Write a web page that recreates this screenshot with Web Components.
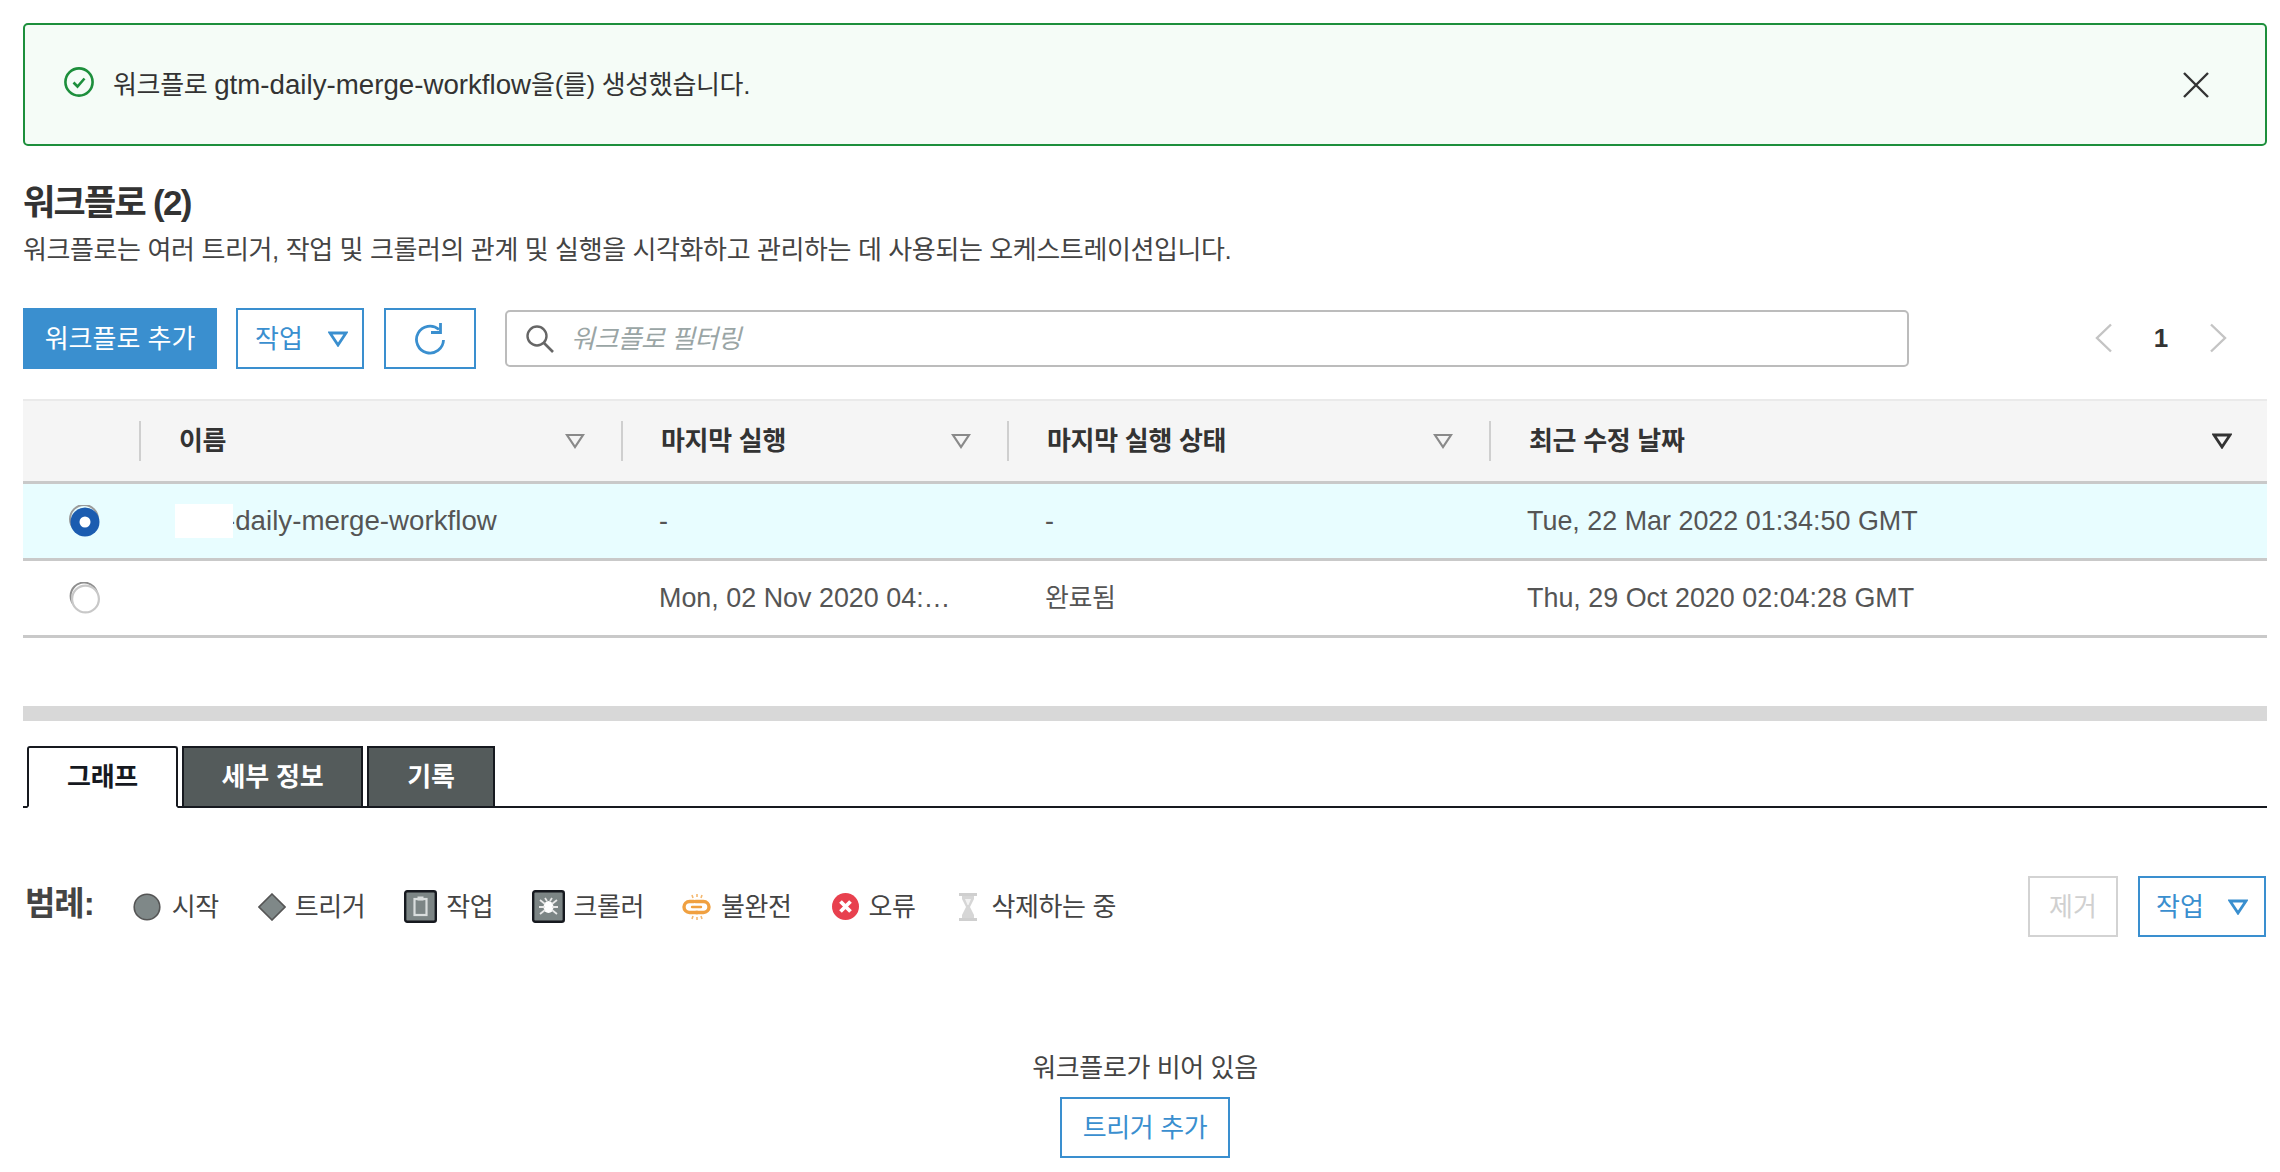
<!DOCTYPE html>
<html lang="ko"><head><meta charset="utf-8"><title>워크플로</title>
<style>
html,body{margin:0;padding:0;background:#fff;overflow:hidden}
body{font:26px/36px "Liberation Sans","Noto Sans CJK KR",sans-serif;color:#444;width:2280px;height:1172px}
</style></head><body>
<wf-page></wf-page>
<script>
const caret=(c='#3a8fcf',w=2.8)=>`<svg width="20" height="16" viewBox="0 0 20 16"><path d="M2 2H18L10 14Z" fill="none" stroke="${c}" stroke-width="${w}" stroke-linejoin="miter"/></svg>`;
function def(name,css,html){
  customElements.define(name,class extends HTMLElement{
    constructor(){super();const s=this.attachShadow({mode:'open'});s.innerHTML=`<style>${css}</style>${typeof html==='function'?html(this):html}`;}
  });
}
def('wf-alert',`:host{display:flex;align-items:center;box-sizing:border-box;height:123px;border:2px solid #1d8f3c;border-radius:5px;background:#f5fcf7;padding:0 56px 0 39px;color:#333;letter-spacing:-.35px}
 .t{flex:1;margin-left:19px;margin-top:1px} svg{display:block} .i{margin-top:-6px;flex:none}`,
 `<svg class="i" width="30" height="30" viewBox="0 0 30 30"><circle cx="15" cy="15" r="13.6" fill="none" stroke="#1d8f3c" stroke-width="2.6"/><path d="M9.5 15.5l4 4 7-8" fill="none" stroke="#1d8f3c" stroke-width="2.6"/></svg>
 <div class="t"><slot></slot></div>
 <svg width="26" height="26" viewBox="0 0 26 26"><path d="M1 1L25 25M25 1L1 25" stroke="#333" stroke-width="2.4"/></svg>`);
def('wf-btn',`:host{display:inline-flex;align-items:center;justify-content:center;box-sizing:border-box;height:61px;border:2px solid #3a8fcf;background:#fff;color:#3a8fcf;font-size:26px;white-space:nowrap}
 :host([primary]){background:#3a8fcf;color:#fff}
 :host([disabled]){border-color:#d3d3d3;color:#d0d0d0}`,`<slot></slot>`);
def('wf-filter',`:host{display:flex;align-items:center;box-sizing:border-box;height:57px;border:2px solid #bcbcbc;border-radius:5px;color:#9aa5a5;font-style:italic;padding-left:18px;letter-spacing:-.6px}
 svg{margin-right:16px;flex:none}`,
 `<svg width="30" height="30" viewBox="0 0 30 30"><circle cx="12" cy="12" r="9.5" fill="none" stroke="#666" stroke-width="2.4"/><path d="M19 19l9 9" stroke="#666" stroke-width="2.6"/></svg><slot></slot>`);
def('wf-pager',`:host{display:flex;align-items:center;color:#333;font-weight:700;margin-top:-2px}
 span{width:28px;text-align:center;margin:0 34px}`,
 `<svg width="18" height="30" viewBox="0 0 18 30"><path d="M16 1.5L2 15L16 28.5" fill="none" stroke="#c4c4c4" stroke-width="2.4"/></svg><span>1</span><svg width="18" height="30" viewBox="0 0 18 30"><path d="M2 1.5L16 15L2 28.5" fill="none" stroke="#c4c4c4" stroke-width="2.4"/></svg>`);
const cols='116px 482px 386px 482px 1fr';
def('wf-th',`:host{display:flex;align-items:center;box-sizing:border-box;height:40px;border-left:2px solid #cfcfcf;padding-left:38px;padding-right:36px;font-weight:700;color:#333;justify-content:space-between;letter-spacing:-.3px}
 :host([last]){padding-right:35px}`,
 t=>`<slot></slot>${caret(t.hasAttribute('last')?'#333':'#8a8a8a',t.hasAttribute('last')?2.8:2.2)}`);
def('wf-head',`:host{display:grid;grid-template-columns:${cols};align-items:center;box-sizing:border-box;height:85px;background:#f5f5f5;border-top:2px solid #eaeaea;border-bottom:3px solid #c9c9c9}`,`<slot></slot>`);
def('wf-row',`:host{display:grid;grid-template-columns:${cols};align-items:center;box-sizing:border-box;height:77px;border-bottom:3px solid #c9c9c9;color:#555}
 :host([sel]){background:#e8fdff}`,`<slot></slot>`);
def('wf-radio',`:host{display:block;width:32px;height:32px;margin-left:46px}svg{display:block}`,
 t=>t.hasAttribute('on')
 ?`<svg width="32" height="32" viewBox="0 0 32 32"><circle cx="15" cy="14" r="14" fill="none" stroke="#9a9a9a" stroke-width="2"/><circle cx="16" cy="17" r="14.5" fill="#1b5cb0"/><circle cx="16" cy="17" r="5.5" fill="#fff"/></svg>`
 :`<svg width="32" height="32" viewBox="0 0 32 32"><circle cx="15" cy="14" r="13.4" fill="none" stroke="#8e8e8e" stroke-width="2"/><circle cx="16.5" cy="17" r="13.4" fill="#fff" stroke="#c8c8c8" stroke-width="2.2"/></svg>`);
def('wf-cell',`:host{display:block;padding-left:38px;white-space:nowrap;overflow:hidden;font-size:26.9px}
 :host([ko]){font-size:26px;letter-spacing:-.4px}
 :host([mask]){display:flex;align-items:center;padding-left:36px;overflow:visible;font-size:27.7px}
 i{display:block;width:58px;height:34px;background:#fff;flex:none;margin-right:-7px;position:relative;z-index:1}`,
 t=>`${t.hasAttribute('mask')?'<i></i>':''}<slot></slot>`);
def('wf-tabs',`:host{display:flex;align-items:flex-end;height:62px;margin:0 0;border-bottom:2px solid #16191f;padding-left:4px;gap:4px}`,`<slot></slot>`);
def('wf-tab',`:host{display:flex;align-items:center;justify-content:center;box-sizing:border-box;height:62px;margin-bottom:-2px;border:2px solid #16191f;background:#545b5b;color:#fff;font-weight:700;letter-spacing:-.2px}
 :host([active]){background:#fff;color:#16191f;border-bottom-color:#fff;border-radius:3px 3px 0 0}`,`<slot></slot>`);
def('wf-legend-item',`:host{display:flex;align-items:center;gap:var(--g,11px);margin-left:var(--m,40px);color:#444;white-space:nowrap;letter-spacing:-.4px}svg{display:block;flex:none}`,`<slot name="i"></slot><slot></slot>`);
def('wf-legend',`:host{display:flex;align-items:center;height:61px;margin-right:1px}
 b{font-size:33px;font-weight:700;color:#444;margin-left:2px;margin-right:-1px;margin-top:-5px;white-space:nowrap;letter-spacing:-1px}
 .r{margin-left:auto;display:flex;gap:20px}`,
 `<b>범례:</b><slot></slot><div class="r"><slot name="actions"></slot></div>`);
def('wf-empty',`:host{display:flex;flex-direction:column;align-items:center;gap:11px;color:#444;letter-spacing:-.4px}`,`<slot></slot>`);
def('wf-page',`:host{display:flex;flex-direction:column;box-sizing:border-box;width:2280px;padding:23px 13px 0 23px}
 h2{font-size:35px;line-height:44px;font-weight:700;color:#333;margin:35px 0 0;letter-spacing:-1.7px}
 p{margin:5px 0 0;line-height:40px;color:#444;letter-spacing:-.39px}
 .tb{display:flex;align-items:center;margin-top:38px;height:61px}
 .tb wf-filter{flex:none;width:1404px;margin-left:29px}
 .tb wf-pager{margin-left:186px}
 .sp{height:15px;background:#d8d8d8;margin-top:68px}
 .caret{margin-left:25px;display:block}
 .t{margin-top:30px}
 wf-legend{margin-top:68px}
 wf-empty{margin-top:113px}
 svg{display:block}
 .l{font-size:27.7px;letter-spacing:0}
 .bl{filter:blur(.7px)}
 `,
 `<wf-alert>워크플로 <span class="l">gtm-daily-merge-workflow</span>을(를) 생성했습니다.</wf-alert>
 <h2>워크플로 (2)</h2>
 <p>워크플로는 여러 트리거, 작업 및 크롤러의 관계 및 실행을 시각화하고 관리하는 데 사용되는 오케스트레이션입니다.</p>
 <div class="tb">
  <wf-btn primary style="width:194px">워크플로 추가</wf-btn>
  <wf-btn style="width:128px;margin-left:19px;padding-left:3px">작업<span class="caret">${caret()}</span></wf-btn>
  <wf-btn style="width:92px;margin-left:20px"><svg width="32" height="34" viewBox="0 0 32 34"><path d="M25 7.5A13.5 13.5 0 1 0 29.5 18" fill="none" stroke="#3a8fcf" stroke-width="2.8"/><path d="M26.5 1v9.5H17" fill="none" stroke="#3a8fcf" stroke-width="2.8"/></svg></wf-btn>
  <wf-filter>워크플로 필터링</wf-filter>
  <wf-pager></wf-pager>
 </div>
 <div class="t">
  <wf-head><span></span><wf-th>이름</wf-th><wf-th>마지막 실행</wf-th><wf-th>마지막 실행 상태</wf-th><wf-th last>최근 수정 날짜</wf-th></wf-head>
  <wf-row sel><wf-radio on></wf-radio><wf-cell mask>-daily-merge-workflow</wf-cell><wf-cell>-</wf-cell><wf-cell>-</wf-cell><wf-cell>Tue, 22 Mar 2022 01:34:50 GMT</wf-cell></wf-row>
  <wf-row><wf-radio></wf-radio><wf-cell></wf-cell><wf-cell>Mon, 02 Nov 2020 04:…</wf-cell><wf-cell ko>완료됨</wf-cell><wf-cell>Thu, 29 Oct 2020 02:04:28 GMT</wf-cell></wf-row>
 </div>
 <div class="sp"></div>
 <wf-tabs style="margin-top:23px"><wf-tab active style="width:151px">그래프</wf-tab><wf-tab style="width:181px">세부 정보</wf-tab><wf-tab style="width:128px">기록</wf-tab></wf-tabs>
 <wf-legend>
  <wf-legend-item style="--m:40px"><svg slot="i" width="28" height="28" viewBox="0 0 28 28"><circle cx="14" cy="14" r="12.8" fill="#7f8888" stroke="#555" stroke-width="1.6"/></svg>시작</wf-legend-item>
  <wf-legend-item style="--m:39px;--g:9px"><svg slot="i" width="28" height="28" viewBox="0 0 28 28"><path d="M14 1L27 14L14 27L1 14Z" fill="#7f8888" stroke="#555" stroke-width="1.6"/></svg>트리거</wf-legend-item>
  <wf-legend-item style="--m:39px;--g:9px"><svg slot="i" width="33" height="33" viewBox="0 0 33 33"><rect x="1.2" y="1.2" width="30.6" height="30.6" rx="2" fill="#7c8585" stroke="#16191f" stroke-width="2.4"/><g class="bl"><rect x="10.5" y="9" width="12" height="16" fill="none" stroke="#d9dddd" stroke-width="2.2"/><rect x="13.5" y="6.5" width="6" height="4" fill="#d9dddd"/></g></svg>작업</wf-legend-item>
  <wf-legend-item style="--m:39px;--g:8px"><svg slot="i" width="33" height="33" viewBox="0 0 33 33"><rect x="1.2" y="1.2" width="30.6" height="30.6" rx="2" fill="#7c8585" stroke="#16191f" stroke-width="2.4"/><g class="bl"><ellipse cx="16.5" cy="17" rx="5" ry="6" fill="#fff"/><path d="M8 10l5 4M25 10l-5 4M7 17h6M26 17h-6M8 24l5-4M25 24l-5-4M13 8l2 3M20 8l-2 3" stroke="#e8e8e8" stroke-width="1.8"/></g></svg>크롤러</wf-legend-item>
  <wf-legend-item style="--m:38px;--g:10px"><svg slot="i" width="29" height="28" viewBox="0 0 29 28" style="filter:blur(.6px)"><g fill="none" stroke="#f0a040" stroke-width="3.4" stroke-linecap="round"><path d="M12 8.5H7.500a5.500 5.500 0 0 0 0 11h8"/><path d="M14 19.500h7.500a5.500 5.500 0 0 0 0-11h-8"/><path d="M10 14h9" stroke-width="2.400"/></g><path d="M10 2l1 3M15 1v3M20 2l-1 3M10 26l1-3M15 27v-3M20 26l-1-3" stroke="#f4b870" stroke-width="1.6"/></svg>불완전</wf-legend-item>
  <wf-legend-item style="--m:40px;--g:10px"><svg slot="i" width="27" height="27" viewBox="0 0 27 27"><circle cx="13.5" cy="13.5" r="13.5" fill="#e8404e"/><path d="M8.5 8.5l10 10M18.5 8.5l-10 10" stroke="#fff" stroke-width="3.8"/></svg>오류</wf-legend-item>
  <wf-legend-item style="--m:43px;--g:15px"><svg slot="i" width="18" height="28" viewBox="0 0 18 28" style="filter:blur(.6px)"><path d="M0 1.500h18M0 26.500h18" stroke="#cfcfcf" stroke-width="3"/><path d="M3 3h12v3L11 14l4 8v3H3v-3l4-8L3 6Z" fill="#d6d6d6"/><path d="M6 6h6L9.500 12h-1Z" fill="#f2f2f2"/></svg>삭제하는 중</wf-legend-item>
  <wf-btn slot="actions" disabled style="width:90px">제거</wf-btn>
  <wf-btn slot="actions" style="width:128px">작업<span class="caret" style="margin-left:24px">${caret()}</span></wf-btn>
 </wf-legend>
 <wf-empty><span>워크플로가 비어 있음</span><wf-btn style="width:170px">트리거 추가</wf-btn></wf-empty>`);
</script>
</body></html>
